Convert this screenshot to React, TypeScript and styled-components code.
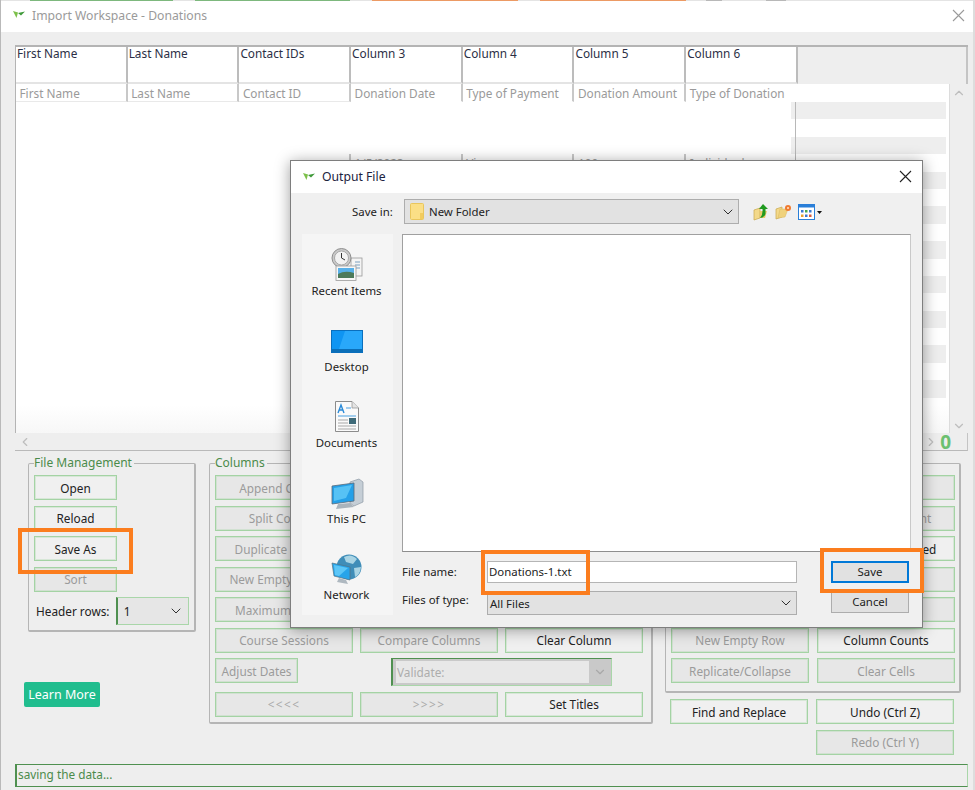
import * as React from "react";
import styled, { createGlobalStyle } from "styled-components";
import { ChevronDown, ChevronLeft, ChevronRight, ChevronUp } from "lucide-react";

const GlobalStyle = createGlobalStyle`
    * {
        box-sizing: border-box;
    }
    html,
    body {
        margin: 0;
        background: #eeeeee;
        font-family: "Noto Sans", "Open Sans", sans-serif;
        font-size: 11.8px;
    }
`;

const Page = styled.div`
    position: relative;
    width: 975px;
    height: 790px;
    overflow: hidden;
    background: #eeeeee;
    border-left: 1px solid #b9b9b9;
    border-right: 2px solid #dddddd;
`;

const TopStrip = styled.div`
    display: flex;
    height: 1px;
    background: #e4e4e4;
`;

const StripPiece = styled.div<{ $left: number; $width: number; $color: string }>`
    margin-left: ${(p) => p.$left}px;
    width: ${(p) => p.$width}px;
    background: ${(p) => p.$color};
`;

const TitleBar = styled.div<{ $dark?: boolean }>`
    display: flex;
    align-items: center;
    flex: none;
    height: ${(p) => (p.$dark ? 32 : 31)}px;
    padding: 0 ${(p) => (p.$dark ? 10 : 8)}px ${(p) => (p.$dark ? 1 : 3)}px 11px;
    gap: 6px;
    background: #ffffff;
    color: ${(p) => (p.$dark ? "#1c2340" : "#9a9a9a")};
    font-size: 12.2px;
`;

const TitleText = styled.span`
    flex: 1;
`;

const Main = styled.div`
    padding: 13px 5px 0 14px;
`;

const HeaderRow = styled.div`
    display: flex;
    height: 39px;
    border-top: 2px solid #b4b4b4;
    border-left: 1px solid #b4b4b4;
`;

const HeaderCell = styled.div`
    width: 111.7px;
    padding-left: 1px;
    background: #ffffff;
    border-right: 2px solid #bcbcbc;
    border-bottom: 2px solid #e4e4e4;
    color: #2b2f45;
    line-height: 12px;
`;

const HeaderFiller = styled.div`
    flex: 1;
    border-right: 2px solid #c4c4c4;
`;

const GridBody = styled.div`
    display: flex;
    height: 349px;
`;

const RowList = styled.div`
    flex: 1;
    background: linear-gradient(#ffffff 92%, #f7f7f7 100%);
    border-left: 1px solid #b4b4b4;
    border-right: 1px solid #dcdcdc;
    overflow: hidden;
`;

const Row = styled.div`
    display: flex;
    height: 17.4px;
    &:first-child {
        height: 18px;
    }
`;

const Cell = styled.div<{ $w: number; $rule?: boolean; $under?: boolean }>`
    width: ${(p) => p.$w}px;
    flex: none;
    padding-left: 3.5px;
    line-height: 19px;
    color: #9a9a9a;
    white-space: nowrap;
    border-right: 2px solid ${(p) => (p.$rule ? "#c8c8c8" : "transparent")};
    border-bottom: 1px solid ${(p) => (p.$under ? "#e9e9e9" : "transparent")};
`;

const RowTail = styled.div<{ $zebra: boolean }>`
    position: relative;
    flex: 1;
    margin-right: 3px;
    background: ${(p) => (p.$zebra ? "#eeeeee" : "transparent")};
`;

const TailRule = styled.span`
    position: absolute;
    left: 4px;
    top: 0;
    bottom: 0;
    width: 1px;
    background: #b8b8b8;
`;

const VScroll = styled.div`
    display: flex;
    flex-direction: column;
    align-items: center;
    justify-content: space-between;
    width: 18px;
    padding: 2px 0 0;
    color: #bdbdbd;
`;

const HScroll = styled.div`
    display: flex;
    align-items: center;
    height: 18px;
    padding: 0 6px 0 3px;
    border-bottom: 1px solid #b9b9b9;
    border-right: 1px solid #c4c4c4;
    color: #bdbdbd;
`;

const ScrollSpace = styled.div`
    flex: 1;
`;

const Counter = styled.span`
    margin: 0 10px 0 2px;
    color: #6cc070;
    font-size: 19px;
    font-weight: 700;
    line-height: 16px;
`;

const Panels = styled.div`
    display: flex;
    align-items: flex-start;
    height: 308px;
    padding: 5px 0 0 9px;
`;

const Side = styled.div<{ $gap: number }>`
    display: flex;
    flex-direction: column;
    margin-right: ${(p) => p.$gap}px;
`;

const Group = styled.fieldset<{ $w: number; $h: number; $left?: number }>`
    width: ${(p) => p.$w}px;
    height: ${(p) => p.$h}px;
    margin: 0 0 0 ${(p) => p.$left ?? 0}px;
    padding: 5px 5px 0 5px;
    border: 1px solid #b5b5b5;
    border-right-width: 2px;
    border-bottom-width: 2px;
    border-radius: 2px;
    min-inline-size: 0;
`;

const Legend = styled.legend`
    padding: 0 2px 0 0;
    color: #4b8b4b;
    font-size: 12px;
    line-height: 14px;
`;

const ButtonStack = styled.div`
    display: grid;
    grid-template-columns: 83px;
    grid-auto-rows: 25px;
    row-gap: 5.5px;
`;

const ButtonGrid = styled.div<{ $cols: number; $gap: number }>`
    display: grid;
    grid-template-columns: repeat(${(p) => p.$cols}, 138px);
    grid-auto-rows: minmax(25px, auto);
    column-gap: ${(p) => p.$gap}px;
    row-gap: 5.5px;
`;

const ActionButton = styled.div<{ $dim?: boolean; $col?: number }>`
    display: flex;
    align-items: center;
    justify-content: center;
    height: 25px;
    white-space: nowrap;
    border: 1px solid #a4d3a4;
    box-shadow: inset 0 0 0 1px rgba(170, 214, 170, 0.35);
    background: ${(p) => (p.$dim ? "#e7e7e7" : "#f0f0f0")};
    color: ${(p) => (p.$dim ? "#9b9b9b" : "#222222")};
    grid-column: ${(p) => p.$col ?? "auto"};
`;

const ShortButton = styled(ActionButton)`
    width: 83px;
`;

const ArrowButton = styled(ActionButton)`
    letter-spacing: 1.4px;
    color: #aaaaaa;
`;

const ValidateBox = styled.div`
    grid-column: 2 / 4;
    display: flex;
    align-items: center;
    width: 221px;
    height: 28px;
    margin-left: 31px;
    padding: 2px 0 2px 3px;
    background: #c9c9c9;
    border: 1px solid #a9d6a9;
    border-top-color: #4f9050;
    border-left: 2px solid #4f9050;
    color: #adadad;
`;

const ValidateText = styled.div`
    flex: 1;
    height: 100%;
    padding-left: 1px;
    background: #e8e8e8;
    line-height: 23px;
`;

const ValidateArrow = styled.div`
    display: flex;
    justify-content: center;
    width: 22px;
    color: #a8a8a8;
`;

const HeaderRows = styled.div`
    display: flex;
    align-items: center;
    margin-top: 5px;
    color: #222222;
`;

const HeaderLabel = styled.span`
    padding-left: 2px;
    width: 83px;
`;

const HeaderSelect = styled.div`
    display: flex;
    align-items: center;
    justify-content: space-between;
    width: 74px;
    height: 28px;
    padding: 0 4px 0 6px;
    background: #e6e6e6;
    border: 1px solid #a9d6a9;
    border-left: 2px solid #4f9050;
`;

const LearnMore = styled.div`
    display: flex;
    align-items: center;
    justify-content: center;
    width: 76px;
    height: 25px;
    margin-top: 50px;
    border-radius: 2px;
    background: #20bd8e;
    color: #ffffff;
    font-size: 12.5px;
`;

const BelowGrid = styled(ButtonGrid)`
    margin: 6px 0 0 5px;
`;

const StatusBar = styled.div`
    height: 23px;
    margin-top: 5px;
    padding-left: 1px;
    border: 1px solid #4f9050;
    border-left-width: 2px;
    border-right-color: #a9d6a9;
    color: #4b8b4b;
    line-height: 18px;
`;

const Dialog = styled.div`
    position: absolute;
    left: 289px;
    top: 160px;
    width: 633px;
    height: 468px;
    display: flex;
    flex-direction: column;
    background: #f0f0f0;
    border: 1px solid #7e7e7e;
    box-shadow: 0 2px 14px rgba(0, 0, 0, 0.38);
    font-size: 11.4px;
`;

const DialogBody = styled.div`
    display: grid;
    grid-template-columns: 91px 1fr;
    grid-template-rows: auto 1fr;
    column-gap: 9px;
    flex: 1;
    padding: 6px 11px 0 11px;
`;

const SaveInRow = styled.div`
    grid-column: 1 / 3;
    display: flex;
    align-items: center;
    height: 25px;
    margin-bottom: 10px;
    color: #222222;
`;

const SaveInLabel = styled.span`
    width: 102px;
    padding-left: 50px;
    white-space: nowrap;
`;

const Combo = styled.div<{ $w: number; $h: number }>`
    display: flex;
    align-items: center;
    width: ${(p) => p.$w}px;
    height: ${(p) => p.$h}px;
    padding: 0 2px 0 5px;
    background: #e2e2e2;
    border: 1px solid #adadad;
    color: #222222;
`;

const ComboName = styled.span`
    flex: 1;
    padding-left: 5px;
`;

const Toolbar = styled.div`
    display: flex;
    align-items: center;
    gap: 6px;
    margin-left: 14px;
`;

const Places = styled.div`
    display: flex;
    flex-direction: column;
    height: 381px;
    padding: 14px 2px 0 0;
    background: #f5f5f5;
`;

const Place = styled.div<{ $gap: number }>`
    display: flex;
    flex-direction: column;
    align-items: center;
    justify-content: flex-end;
    flex: none;
    height: 76px;
    color: #222222;
    line-height: 15px;
    padding-bottom: 26px;
    gap: ${(p) => p.$gap}px;
`;

const Right = styled.div`
    display: flex;
    flex-direction: column;
`;

const FileList = styled.div`
    height: 318px;
    background: #ffffff;
    border: 1px solid #a0a0a0;
    border-right-color: #c9c9c9;
    border-bottom-color: #8e8e8e;
`;

const FormGrid = styled.div`
    display: grid;
    grid-template-columns: 85px 310px 112px;
    justify-content: start;
    margin-top: 9px;
    color: #222222;
`;

const FormLabel = styled.span`
    line-height: 22px;
`;

const NameInput = styled.div`
    height: 22px;
    padding-left: 1px;
    background: #ffffff;
    border: 1px solid #b5b5b5;
    line-height: 20px;
`;

const SaveButton = styled.div`
    display: flex;
    align-items: center;
    justify-content: center;
    width: 78px;
    height: 22px;
    margin-left: 34px;
    padding-bottom: 1px;
    background: #e1e1e1;
    border: 2px solid #0078d7;
`;

const CancelButton = styled(SaveButton)`
    height: 23px;
    border: 1px solid #adadad;
`;

const TypeCombo = styled(Combo)`
    margin-top: 8px;
    padding-left: 2px;
    ${ComboName} {
        padding-left: 0;
    }
`;

const TypeLabel = styled(FormLabel)`
    margin-top: 6px;
`;

const CancelSlot = styled.div`
    margin-top: 7px;
`;

const Highlight = styled.div<{ $x: number; $y: number; $w: number; $h: number }>`
    position: absolute;
    left: ${(p) => p.$x}px;
    top: ${(p) => p.$y}px;
    width: ${(p) => p.$w}px;
    height: ${(p) => p.$h}px;
    border: 4px solid #fb7d1e;
`;

const Sprout = () => (
    <svg width="14" height="12" viewBox="0 0 14 12">
        <path d="M1 2 L6 3.5 L4.5 9 Z" fill="#7cc04a" />
        <path d="M6 4 L13 2.5 L9 6.5 Z" fill="#3f9a3a" />
    </svg>
);

const CloseGlyph = ({ color }: { color: string }) => (
    <svg width="13" height="13" viewBox="0 0 13 13">
        <path d="M1 1 L12 12 M12 1 L1 12" stroke={color} strokeWidth="1.1" fill="none" />
    </svg>
);

const FolderUp = () => (
    <svg width="16" height="18" viewBox="0 0 16 18">
        <path d="M1 7 L7 5 L7 15 L1 17 Z" fill="#f3d98a" stroke="#c9a84a" strokeWidth="0.7" />
        <path d="M7 8 L14 8 L12 15 L7 15 Z" fill="#ecca6c" />
        <path d="M10 1 L15 6 L12.5 6 L12.5 11 Q12 14 7 15 Q10 12 9.5 6 L6 6 Z" fill="#1f9a1f" />
    </svg>
);

const FolderNew = () => (
    <svg width="17" height="16" viewBox="0 0 17 16">
        <path d="M1 5 L7 3 L7 13 L1 15 Z" fill="#f3d98a" stroke="#c9a84a" strokeWidth="0.7" />
        <path d="M5 5 L13 5 L10 13 L3 14 Z" fill="#f0d27c" stroke="#d8b860" strokeWidth="0.5" />
        <circle cx="13" cy="4" r="3" fill="#f07a30" />
        <circle cx="13" cy="4" r="1" fill="#ffe9c8" />
    </svg>
);

const ViewMenu = () => (
    <svg width="25" height="16" viewBox="0 0 25 16">
        <rect x="0.5" y="0.5" width="16" height="15" fill="#ffffff" stroke="#2a7fd8" />
        <rect x="0.5" y="0.5" width="16" height="3" fill="#2a7fd8" />
        <rect x="3" y="6" width="2.5" height="2.5" fill="#3a78d0" />
        <rect x="7" y="6" width="2.5" height="2.5" fill="#4aa84a" />
        <rect x="11" y="6" width="2.5" height="2.5" fill="#3a78d0" />
        <rect x="3" y="10.5" width="2.5" height="2.5" fill="#e8a030" />
        <rect x="7" y="10.5" width="2.5" height="2.5" fill="#3a78d0" />
        <rect x="11" y="10.5" width="2.5" height="2.5" fill="#d85a3a" />
        <path d="M19 7 L24 7 L21.5 10 Z" fill="#111111" />
    </svg>
);

const RecentIcon = () => (
    <svg width="32" height="33" viewBox="0 0 32 33">
        <rect x="20" y="10" width="11" height="18" fill="#f4f4f4" stroke="#9a9a9a" strokeWidth="0.8" />
        <path d="M24 14 H29 M24 17 H29 M24 20 H29" stroke="#7aa0c0" strokeWidth="1" />
        <circle cx="10.5" cy="10" r="9.5" fill="#c9c9c9" stroke="#8e8e8e" />
        <circle cx="10.5" cy="10" r="7" fill="#f2f2f2" stroke="#a8a8a8" />
        <path d="M10.5 5 V10 L14 12" stroke="#333333" fill="none" strokeWidth="1" />
        <rect x="5" y="18" width="20" height="14.5" fill="#f7f7f7" stroke="#9a9a9a" strokeWidth="0.8" />
        <rect x="7" y="20" width="16" height="6" fill="#58b0e8" />
        <path d="M7 26 Q14 22 23 25 V30 H7 Z" fill="#4c7a5a" />
    </svg>
);

const DesktopIcon = () => (
    <svg width="32" height="23" viewBox="0 0 32 23">
        <rect x="0.5" y="0.5" width="31" height="22" fill="#0f95f2" stroke="#0a6fbd" />
        <path d="M14 1 L31 1 L31 19 L8 19 Z" fill="#29a8fa" />
        <rect x="1" y="19" width="30" height="3" fill="#0b6fb8" />
    </svg>
);

const DocumentIcon = () => (
    <svg width="24" height="31" viewBox="0 0 24 31">
        <path d="M0.5 0.5 H17 L23.5 7 V30.5 H0.5 Z" fill="#fafafa" stroke="#8c8c8c" />
        <path d="M17 0.5 V7 H23.5" fill="#e4e4e4" stroke="#8c8c8c" strokeWidth="0.7" />
        <path d="M3 12 L6 4 L9 12 M4 9 H8" stroke="#2a8ad8" strokeWidth="1.4" fill="none" />
        <path d="M11 7 H16 M3 15 H21" stroke="#4aa0e0" strokeWidth="1.2" />
        <path d="M3 19 H13 M3 22 H13 M3 25 H21 M3 28 H21" stroke="#a8a8a8" strokeWidth="1" />
        <rect x="14" y="17" width="7" height="6" fill="#3e6a78" />
    </svg>
);

const PcIcon = () => (
    <svg width="34" height="32" viewBox="0 0 34 32">
        <path d="M20 4 L29 1 L33 4 L33 24 L24 28 L20 25 Z" fill="#c5ced6" stroke="#8e9aa5" strokeWidth="0.7" />
        <path d="M2 8 L24 5 L24 23 L2 26 Z" fill="#25a0e8" stroke="#5a6a78" strokeWidth="0.8" />
        <path d="M4 10 L22 7 L16 20 L4 23 Z" fill="#56c2f5" />
        <path d="M8 26 L20 25 L24 29 L6 31 Z" fill="#aab4bc" />
    </svg>
);

const NetworkIcon = () => (
    <svg width="31" height="31" viewBox="0 0 31 31">
        <circle cx="18" cy="13" r="12.5" fill="#3f8db8" />
        <path d="M13 3 Q20 -1 26 5 L22 10 L15 8 Z M23 14 L30 13 Q29 21 24 23 Z" fill="#a9d4e4" />
        <path d="M1 9 L19 13 L19 26 L3 22 Z" fill="#27a4ea" stroke="#56717f" strokeWidth="0.7" />
        <path d="M3 11 L17 14 L8 22 L4 21 Z" fill="#5cc6f7" />
        <path d="M8 24 L15 26 L17 30 L6 28 Z" fill="#aeb8c0" />
    </svg>
);

const FolderSmall = () => (
    <svg width="14" height="17" viewBox="0 0 14 17">
        <rect x="0.5" y="0.5" width="13" height="16" rx="1" fill="#fbdf86" stroke="#e9c65c" />
        <rect x="10" y="10" width="3" height="6" fill="#f2cc5e" />
    </svg>
);

const stripPieces = [
    { left: 29, width: 143, color: "#7db87d" },
    { left: 22, width: 155, color: "#7db87d" },
    { left: 22, width: 146, color: "#ec9a64" },
    { left: 22, width: 146, color: "#ec9a64" },
    { left: 20, width: 16, color: "#b8b8b8" },
    { left: 44, width: 20, color: "#b8b8b8" },
];

const titles = ["First Name", "Last Name", "Contact IDs", "Column 3", "Column 4", "Column 5", "Column 6"];
const mapped = ["First Name", "Last Name", "Contact ID", "Donation Date", "Type of Payment", "Donation Amount", "Type of Donation"];
const sample = ["", "", "", "1/5/2023", "Visa", "100", "Individual"];

const columnLabels = ["Append Column", "Split Column", "Duplicate Column", "New Empty Column", "Maximum Length"];

// left column sits wholly behind the dialog up to the last two rows
const rowButtons: { label: string; dim?: boolean }[] = [
    { label: "", dim: true },
    { label: "", dim: true },
    { label: "", dim: true },
    { label: "Append Content", dim: true },
    { label: "", dim: true },
    { label: "Delete Unselected" },
    { label: "", dim: true },
    { label: "", dim: true },
    { label: "", dim: true },
    { label: "", dim: true },
    { label: "New Empty Row", dim: true },
    { label: "Column Counts" },
    { label: "Replicate/Collapse", dim: true },
    { label: "Clear Cells", dim: true },
];

const rowCount = 19;

export default function App() {
    return (
        <>
            <GlobalStyle />
            <Page>
                <TopStrip>
                    {stripPieces.map((piece, index) => (
                        <StripPiece key={index} $left={piece.left} $width={piece.width} $color={piece.color} />
                    ))}
                </TopStrip>
                <TitleBar>
                    <Sprout />
                    <TitleText>Import Workspace - Donations</TitleText>
                    <CloseGlyph color="#9a9a9a" />
                </TitleBar>
                <Main>
                    <HeaderRow>
                        {titles.map((title) => (
                            <HeaderCell key={title}>{title}</HeaderCell>
                        ))}
                        <HeaderFiller />
                    </HeaderRow>
                    <GridBody>
                        <RowList>
                            {Array.from({ length: rowCount }).map((_, index) => {
                                const texts = index === 0 ? mapped : index === 4 ? sample : null;
                                return (
                                    <Row key={index}>
                                        {Array.from({ length: 7 }).map((_, col) => (
                                            <Cell
                                                key={col}
                                                $w={col === 6 ? 105 : 111.7}
                                                $rule={col < 6 && (index === 0 || (index === 4 && col >= 2))}
                                                $under={index === 0 && col < 3}
                                            >
                                                {texts ? texts[col] : ""}
                                            </Cell>
                                        ))}
                                        <RowTail $zebra={index % 2 === 1}>{index > 0 && <TailRule />}</RowTail>
                                    </Row>
                                );
                            })}
                        </RowList>
                        <VScroll>
                            <ChevronUp size={14} />
                            <ChevronDown size={14} />
                        </VScroll>
                    </GridBody>
                    <HScroll>
                        <ChevronLeft size={14} />
                        <ScrollSpace />
                        <ChevronRight size={14} />
                        <Counter>0</Counter>
                    </HScroll>
                    <Panels>
                        <Side $gap={13}>
                            <Group $w={168} $h={176} $left={4}>
                                <Legend>File Management</Legend>
                                <ButtonStack>
                                    <ActionButton>Open</ActionButton>
                                    <ActionButton>Reload</ActionButton>
                                    <ActionButton>Save As</ActionButton>
                                    <ActionButton $dim>Sort</ActionButton>
                                </ButtonStack>
                                <HeaderRows>
                                    <HeaderLabel>Header rows:</HeaderLabel>
                                    <HeaderSelect>
                                        1
                                        <ChevronDown size={16} strokeWidth={1.4} />
                                    </HeaderSelect>
                                </HeaderRows>
                            </Group>
                            <LearnMore>Learn More</LearnMore>
                        </Side>
                        <Side $gap={12}>
                            <Group $w={444} $h={268}>
                                <Legend>Columns</Legend>
                                <ButtonGrid $cols={3} $gap={7}>
                                    {columnLabels.map((label) => (
                                        <ActionButton key={label} $dim $col={1}>
                                            {label}
                                        </ActionButton>
                                    ))}
                                    <ActionButton $dim $col={1}>Course Sessions</ActionButton>
                                    <ActionButton $dim>Compare Columns</ActionButton>
                                    <ActionButton>Clear Column</ActionButton>
                                    <ShortButton $dim>Adjust Dates</ShortButton>
                                    <ValidateBox>
                                        <ValidateText>Validate:</ValidateText>
                                        <ValidateArrow>
                                            <ChevronDown size={14} />
                                        </ValidateArrow>
                                    </ValidateBox>
                                    <ArrowButton $dim>&lt;&lt;&lt;&lt;</ArrowButton>
                                    <ArrowButton $dim>&gt;&gt;&gt;&gt;</ArrowButton>
                                    <ActionButton>Set Titles</ActionButton>
                                </ButtonGrid>
                            </Group>
                        </Side>
                        <div>
                            <Group $w={296} $h={237}>
                                <Legend>Rows</Legend>
                                <ButtonGrid $cols={2} $gap={8}>
                                    {rowButtons.map((button, index) => (
                                        <ActionButton key={index} $dim={button.dim}>
                                            {button.label}
                                        </ActionButton>
                                    ))}
                                </ButtonGrid>
                            </Group>
                            <BelowGrid $cols={2} $gap={8}>
                                <ActionButton>Find and Replace</ActionButton>
                                <ActionButton>Undo (Ctrl Z)</ActionButton>
                                <ActionButton $dim $col={2}>Redo (Ctrl Y)</ActionButton>
                            </BelowGrid>
                        </div>
                    </Panels>
                    <StatusBar>saving the data...</StatusBar>
                </Main>

                <Dialog>
                    <TitleBar $dark>
                        <Sprout />
                        <TitleText>Output File</TitleText>
                        <CloseGlyph color="#222222" />
                    </TitleBar>
                    <DialogBody>
                        <SaveInRow>
                            <SaveInLabel>Save in:</SaveInLabel>
                            <Combo $w={335} $h={25}>
                                <FolderSmall />
                                <ComboName>New Folder</ComboName>
                                <ChevronDown size={16} strokeWidth={1.4} />
                            </Combo>
                            <Toolbar>
                                <FolderUp />
                                <FolderNew />
                                <ViewMenu />
                            </Toolbar>
                        </SaveInRow>
                        <Places>
                            <Place $gap={2}>
                                <RecentIcon />
                                Recent Items
                            </Place>
                            <Place $gap={6}>
                                <DesktopIcon />
                                Desktop
                            </Place>
                            <Place $gap={3}>
                                <DocumentIcon />
                                Documents
                            </Place>
                            <Place $gap={1}>
                                <PcIcon />
                                This PC
                            </Place>
                            <Place $gap={2}>
                                <NetworkIcon />
                                Network
                            </Place>
                        </Places>
                        <Right>
                            <FileList />
                            <FormGrid>
                                <FormLabel>File name:</FormLabel>
                                <NameInput>Donations-1.txt</NameInput>
                                <SaveButton>Save</SaveButton>
                                <TypeLabel>Files of type:</TypeLabel>
                                <TypeCombo $w={310} $h={24}>
                                    <ComboName>All Files</ComboName>
                                    <ChevronDown size={16} strokeWidth={1.4} />
                                </TypeCombo>
                                <CancelSlot>
                                    <CancelButton>Cancel</CancelButton>
                                </CancelSlot>
                            </FormGrid>
                        </Right>
                    </DialogBody>
                </Dialog>

                <Highlight $x={17} $y={528} $w={115} $h={46} />
                <Highlight $x={480} $y={550} $w={109} $h={45} />
                <Highlight $x={819} $y={548} $w={104} $h={45} />
            </Page>
        </>
    );
}
